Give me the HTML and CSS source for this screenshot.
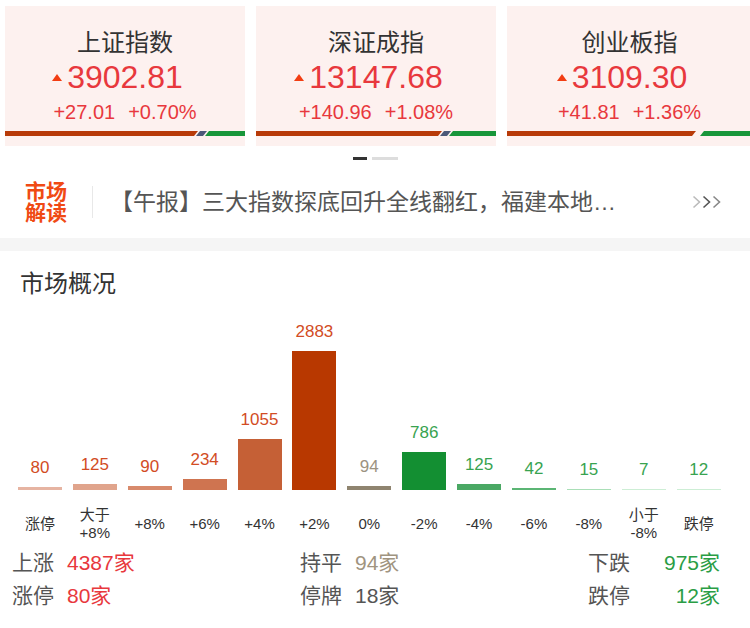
FILE: index.html
```html
<!DOCTYPE html>
<html lang="zh-CN">
<head>
<meta charset="utf-8">
<title>市场概况</title>
<link rel="stylesheet" href="styles.css">
</head>
<body>
<div class="cards">
  <div class="card">
    <div class="card-title">上证指数</div>
    <div class="card-price"><span class="price">3902.81</span></div>
    <div class="card-change"><span>+27.01</span><span>+0.70%</span></div>
    <div class="card-bar"><i class="seg seg-up"></i><i class="seg seg-flat"></i><i class="seg seg-down" style="width:40px"></i></div>
  </div>
  <div class="card">
    <div class="card-title">深证成指</div>
    <div class="card-price"><span class="price">13147.68</span></div>
    <div class="card-change"><span>+140.96</span><span>+1.08%</span></div>
    <div class="card-bar"><i class="seg seg-up"></i><i class="seg seg-flat"></i><i class="seg seg-down" style="width:47px"></i></div>
  </div>
  <div class="card">
    <div class="card-title">创业板指</div>
    <div class="card-price"><span class="price">3109.30</span></div>
    <div class="card-change"><span>+41.81</span><span>+1.36%</span></div>
    <div class="card-bar"><i class="seg seg-up"></i><i class="seg seg-flat is-empty"></i><i class="seg seg-down" style="width:52px"></i></div>
  </div>
</div>
<div class="pager"><i class="dot active"></i><i class="dot"></i></div>

<div class="news">
  <div class="news-tag">市场<br>解读</div>
  <div class="news-sep"></div>
  <div class="news-text">【午报】三大指数探底回升全线翻红，福建本地…</div>
  <svg class="news-more" viewBox="0 0 32 14" width="32" height="14" aria-hidden="true">
    <polyline points="1.5,1.5 7.5,7 1.5,12.5" fill="none" stroke="#bbbbbb" stroke-width="1.6"/>
    <polyline points="11.5,1.5 17.5,7 11.5,12.5" fill="none" stroke="#555555" stroke-width="1.6"/>
    <polyline points="21.5,1.5 27.5,7 21.5,12.5" fill="none" stroke="#888888" stroke-width="1.6"/>
  </svg>
</div>
<div class="band"></div>

<section class="overview">
  <h2 class="ov-title">市场概况</h2>
  <div class="chart">
    <div class="col"><span class="val v-up">80</span><i class="b c1" style="height:3px"></i></div>
    <div class="col"><span class="val v-up">125</span><i class="b c2" style="height:6px"></i></div>
    <div class="col"><span class="val v-up">90</span><i class="b c3" style="height:4px"></i></div>
    <div class="col"><span class="val v-up">234</span><i class="b c4" style="height:11px"></i></div>
    <div class="col"><span class="val v-up">1055</span><i class="b c5" style="height:51px"></i></div>
    <div class="col"><span class="val v-up">2883</span><i class="b c6" style="height:139px"></i></div>
    <div class="col"><span class="val v-flat">94</span><i class="b c7" style="height:4px"></i></div>
    <div class="col"><span class="val v-down">786</span><i class="b c8" style="height:38px"></i></div>
    <div class="col"><span class="val v-down">125</span><i class="b c9" style="height:6px"></i></div>
    <div class="col"><span class="val v-down">42</span><i class="b c10" style="height:2px"></i></div>
    <div class="col"><span class="val v-down">15</span><i class="b c11" style="height:1px"></i></div>
    <div class="col"><span class="val v-down">7</span><i class="b c12" style="height:1px"></i></div>
    <div class="col"><span class="val v-down">12</span><i class="b c13" style="height:1px"></i></div>
  </div>
  <div class="xlabels">
    <span>涨停</span>
    <span>大于<br>+8%</span>
    <span>+8%</span>
    <span>+6%</span>
    <span>+4%</span>
    <span>+2%</span>
    <span>0%</span>
    <span>-2%</span>
    <span>-4%</span>
    <span>-6%</span>
    <span>-8%</span>
    <span>小于<br>-8%</span>
    <span>跌停</span>
  </div>
  <div class="summary">
    <div class="sum-row">
      <div class="grp"><span class="lab">上涨</span><span class="num n-up">4387家</span></div>
      <div class="grp"><span class="lab">持平</span><span class="num n-flat">94家</span></div>
      <div class="grp grp-end"><span class="lab">下跌</span><span class="num n-down">975家</span></div>
    </div>
    <div class="sum-row">
      <div class="grp"><span class="lab">涨停</span><span class="num n-up">80家</span></div>
      <div class="grp"><span class="lab">停牌</span><span class="num n-plain">18家</span></div>
      <div class="grp grp-end"><span class="lab">跌停</span><span class="num n-down">12家</span></div>
    </div>
  </div>
</section>
</body>
</html>
```

FILE: styles.css
```css
* { box-sizing: border-box; margin: 0; padding: 0; }
html, body { background: #fff; }
body {
  width: 750px;
  height: 628px;
  overflow: hidden;
  font-family: "Liberation Sans", "Noto Sans CJK SC", sans-serif;
  color: #333;
}
i { display: block; }

/* index cards */
.cards {
  display: flex;
  gap: 11px;
  padding: 6px 0 0 5px;
  overflow: hidden;
}
.card {
  flex: 0 0 240px;
  height: 140px;
  background: #fdf1ef;
  padding-top: 22px;
  text-align: center;
  display: flex;
  flex-direction: column;
}
.card:last-child { flex: 0 0 245px; }
.card-title {
  font-size: 24px;
  line-height: 30px;
  color: #333;
}
.card-price {
  font-size: 32px;
  line-height: 36px;
  color: #e8383d;
  margin-top: 1px;
}
.price { position: relative; display: inline-block; }
.price::before {
  content: "";
  position: absolute;
  right: calc(100% + 5px);
  top: 15px;
  border-left: 5px solid transparent;
  border-right: 5px solid transparent;
  border-bottom: 7px solid #f23d12;
}
.card-change {
  font-size: 20px;
  line-height: 24px;
  color: #e8383d;
  margin-top: 5px;
  display: flex;
  justify-content: center;
  gap: 13px;
}
.card-bar {
  display: flex;
  height: 5px;
  margin-top: 7px;
}
.seg { height: 5px; }
.seg-up {
  flex: 1;
  background: #b83a08;
  clip-path: polygon(0 0, 100% 0, calc(100% - 4px) 100%, 0 100%);
}
.seg-flat {
  width: 11px;
  margin-left: -2px;
  background: #4b5878;
  clip-path: polygon(4px 0, 100% 0, calc(100% - 4px) 100%, 0 100%);
}
.seg-flat.is-empty { width: 8px; background: transparent; }
.seg-down {
  margin-left: -2px;
  background: #18963a;
  clip-path: polygon(4px 0, 100% 0, 100% 100%, 0 100%);
}

/* pager */
.pager {
  display: flex;
  justify-content: center;
  gap: 5px;
  margin-top: 11px;
  height: 3px;
}
.dot { width: 26px; height: 3px; background: #dddddd; }
.dot.active { width: 14px; background: #333; }

/* news */
.news {
  display: flex;
  align-items: center;
  padding: 21px 0 15px 25px;
}
.news-tag {
  width: 42px;
  font-size: 21px;
  line-height: 21px;
  font-weight: bold;
  color: #f04a14;
}
.news-sep {
  width: 1px;
  height: 32px;
  background: #e8e8e8;
  margin-left: 25px;
}
.news-text {
  flex: 1;
  margin-left: 17px;
  font-size: 23px;
  line-height: 30px;
  color: #555;
  white-space: nowrap;
  overflow: hidden;
}
.news-more {
  flex: 0 0 32px;
  margin-right: 26px;
}
.band { height: 13px; background: #f5f5f5; }

/* overview */
.ov-title {
  margin: 18px 0 0 20px;
  font-size: 24px;
  line-height: 30px;
  font-weight: normal;
  color: #333;
}
.chart {
  display: grid;
  grid-template-columns: repeat(13, 54.9px);
  margin-left: 12.5px;
  height: 191px;
  align-items: end;
}
.col {
  display: flex;
  flex-direction: column;
  align-items: center;
}
.val {
  font-size: 17px;
  line-height: 20px;
  margin-bottom: 9px;
}
.v-up { color: #d24c24; }
.v-flat { color: #9c9281; }
.v-down { color: #38a350; }
.b { width: 44px; }
.c1 { background: #e6b4a2; }
.c2 { background: #e0a48c; }
.c3 { background: #d88a6c; }
.c4 { background: #cf7450; }
.c5 { background: #c56036; }
.c6 { background: #b83800; }
.c7 { background: #8f846f; }
.c8 { background: #138f32; }
.c9 { background: #4aa864; }
.c10 { background: #5bb574; }
.c11 { background: #a9dfb7; }
.c12 { background: #cdeed5; }
.c13 { background: #cdeed5; }

.xlabels {
  display: grid;
  grid-template-columns: repeat(13, 54.9px);
  margin-left: 12.5px;
  margin-top: 16px;
  height: 36px;
  align-items: center;
  text-align: center;
  font-size: 15px;
  line-height: 18px;
  color: #333;
}

.summary {
  margin-top: 4px;
  padding-left: 12px;
}
.sum-row {
  display: grid;
  grid-template-columns: 288px 288px 132px;
  font-size: 21px;
  line-height: 33px;
}
.grp { display: flex; }
.grp-end { justify-content: space-between; }
.lab { width: 55px; color: #555; }
.grp-end .lab { width: auto; }
.n-up { color: #e8383d; }
.n-flat { color: #a09480; }
.n-plain { color: #555; }
.n-down { color: #2a9d45; }
```
